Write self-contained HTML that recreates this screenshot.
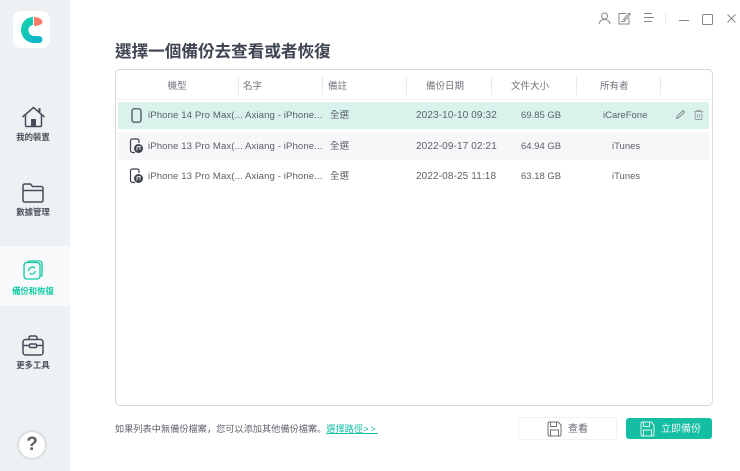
<!DOCTYPE html>
<html><head><meta charset="utf-8">
<style>
html,body{margin:0;padding:0;background:#fff}
#p{position:relative;width:740px;height:471px;overflow:hidden;background:#fff;font-family:"Liberation Sans","Noto Sans CJK TC",sans-serif;color:#555a63}
#p div,#p svg,#p a{position:absolute}
.t{white-space:nowrap;line-height:14px}
.n{font-size:8.4px;font-weight:700;color:#4b505c;width:66px;text-align:center;left:0}
.h{font-size:9.5px;color:#6f737a;top:80px;text-align:center}
.c{font-size:10px;color:#5c6068;letter-spacing:.12px}
.a{font-size:9.6px;letter-spacing:.1px}
.b{font-size:9.500px;letter-spacing:0}
.x{font-size:9.500px;letter-spacing:0}
.s{width:1px;height:18px;top:77px;background:#e6e8ea}
.sc{font-family:"Noto Sans CJK SC",sans-serif}
</style></head><body><div id="p">
<div style="left:0;top:0;width:70px;height:471px;background:#eef1f3"></div>
<div style="left:0;top:246px;width:70px;height:60px;background:#f8fafb"></div>
<div style="left:13px;top:11px;width:37px;height:37px;border-radius:8px;background:#fff"></div>
<svg style="left:13px;top:11px" width="37" height="37" viewBox="0 0 37 37">
<defs><linearGradient id="g" x1="0" y1="0" x2="1" y2="1"><stop offset="0" stop-color="#14d6a6"/><stop offset="1" stop-color="#0fb0cf"/></linearGradient></defs>
<path d="M20 6 C13 6 8 12 8 19 C8 26 14 32 21 32 L26 32 A3.500 3.500 0 0 0 26 25 L21.500 25 C18 25 15.500 22.500 15.500 19 C15.500 16 17.500 14.500 20 14 Z" fill="url(#g)"/>
<path d="M21 6 C26 6 29.500 8.500 29.500 11 C29.500 13 26 15 21 15 Z" fill="#fb7b68"/>
</svg>
<svg style="left:21px;top:106px" width="25" height="22" viewBox="0 0 25 22" fill="none" stroke="#474c5a" stroke-width="1.500">
<path d="M1.500 11 L12.500 1.500 L23.500 11"/><path d="M4.500 9 V19 Q4.500 20.500 6 20.500 H19 Q20.500 20.500 20.500 19 V9"/><path d="M18.500 2 V6" stroke-width="2"/><rect x="10" y="13" width="5" height="7.500" fill="#474c5a" stroke="none"/>
</svg>
<div class="t n" style="top:130px">我的裝置</div>
<svg style="left:22px;top:183px" width="22" height="20" viewBox="0 0 22 20" fill="none" stroke="#474c5a" stroke-width="1.500">
<path d="M1 17 V3 Q1 1 3 1 H8.500 L10.500 3.500 H19 Q21 3.500 21 5.500 V17 Q21 19 19 19 H3 Q1 19 1 17 Z"/><path d="M1 7.500 H21"/>
</svg>
<div class="t n" style="top:205px">數據管理</div>
<svg style="left:23px;top:260px" width="20" height="20" viewBox="0 0 20 20" fill="none" stroke="#10c9a3" stroke-width="1.300">
<rect x="1" y="2.500" width="16" height="16.500" rx="3"/><path d="M4.500 2 Q5 1 6.500 1 H16 Q19 1 19 4 V14.500 Q19 16 18 16.500"/>
<path d="M5.500 11 A4 4 0 0 1 12 8"/><path d="M12.500 11 A4 4 0 0 1 6.500 13.500"/>
</svg>
<div class="t n" style="top:284px;color:#10c9a3">備份和恢復</div>
<svg style="left:22px;top:335px" width="22" height="21" viewBox="0 0 22 21" fill="none" stroke="#474c5a" stroke-width="1.500">
<rect x="1" y="4.500" width="20" height="15.500" rx="2.500"/><path d="M7 4.500 V3 Q7 1 9 1 H13 Q15 1 15 3 V4.500"/><path d="M1 10.500 H7.500 M14.500 10.500 H21"/><rect x="7.500" y="9" width="7" height="3.500" rx="1"/>
</svg>
<div class="t n" style="top:358px">更多工具</div>
<div style="left:19px;top:432px;width:26px;height:26px;border-radius:50%;background:#fff;box-shadow:0 0 3px rgba(0,0,0,.3);text-align:center;font:700 19px/26px 'Liberation Sans',sans-serif;color:#5a5e67">?</div>

<svg style="left:598px;top:12px" width="13" height="13" viewBox="0 0 13 13" fill="none" stroke="#84888e" stroke-width="1"><circle cx="6.500" cy="4" r="3"/><path d="M1 12 Q2 7.500 6.500 7.500 Q11 7.500 12 12"/></svg>
<svg style="left:618px;top:11px" width="13" height="14" viewBox="0 0 13 14" fill="none" stroke="#84888e" stroke-width="1"><path d="M8 2.500 H1 V13 H11 V6.500"/><path d="M5.500 8.500 L11 2 L12.500 3 L7 9.500 Z"/><path d="M3 10.500 H7"/></svg>
<svg style="left:644px;top:12px" width="10" height="10" viewBox="0 0 10 10" stroke="#84888e" stroke-width="1"><path d="M0 1.500 H8 M0 5.500 H10 M0 9.500 H8"/></svg>
<div style="left:665px;top:13px;width:1px;height:10px;background:#e3eef2"></div>
<div style="left:679px;top:20px;width:10px;height:1px;background:#84888e"></div>
<div style="left:702px;top:14px;width:9px;height:9px;border:1px solid #84888e;border-radius:1.500px"></div>
<svg style="left:727px;top:14px" width="9" height="9" viewBox="0 0 9 9" stroke="#84888e" stroke-width="1"><path d="M.500 .500 L8.500 8.500 M8.500 .500 L.500 8.500"/></svg>

<div class="t" style="left:115px;top:41px;font-size:16.600px;line-height:22px;font-weight:700;color:#3f4552">選擇一個備份去查看或者恢復</div>

<div style="left:115px;top:69px;width:596px;height:335px;border:1px solid #d6d8da;border-radius:5px"></div>
<div style="left:116px;top:99px;width:595px;height:1px;background:#f0f1f2"></div>
<div class="t h" style="left:147px;width:60px">機型</div>
<div class="s" style="left:238px"></div>
<div class="t h" style="left:243px">名字</div>
<div class="s" style="left:322px"></div>
<div class="t h" style="left:328px">備註</div>
<div class="s" style="left:406px"></div>
<div class="t h" style="left:426px">備份日期</div>
<div class="s" style="left:491px"></div>
<div class="t h" style="left:511px">文件大小</div>
<div class="s" style="left:576px"></div>
<div class="t h" style="left:600px">所有者</div>
<div class="s" style="left:660px"></div>

<div style="left:118px;top:102px;width:591px;height:27px;background:#d9f2ec"></div>
<div style="left:118px;top:132px;width:591px;height:28px;background:#f7f7f9"></div>

<svg style="left:131px;top:108px" width="11" height="15" viewBox="0 0 11 15" fill="none" stroke="#3e424c" stroke-width="1.200"><rect x="1" y=".800" width="9" height="13.400" rx="2.200"/></svg>
<svg style="left:129px;top:138px" width="15" height="16" viewBox="0 0 15 16"><path d="M6 14.500 H4 Q1.500 14.500 1.500 12 V3 Q1.500 1 4 1 H8 Q10 1 10 3 V5" fill="none" stroke="#3e424c" stroke-width="1.200"/><circle cx="9.500" cy="10.500" r="4.500" fill="#3e424c"/><path d="M8 12.500 V9 L11 8.300 V11.800" fill="none" stroke="#fff" stroke-width=".9"/></svg>
<svg style="left:129px;top:168px" width="15" height="16" viewBox="0 0 15 16"><path d="M6 14.500 H4 Q1.500 14.500 1.500 12 V3 Q1.500 1 4 1 H8 Q10 1 10 3 V5" fill="none" stroke="#3e424c" stroke-width="1.200"/><circle cx="9.500" cy="10.500" r="4.500" fill="#3e424c"/><path d="M8 12.500 V9 L11 8.300 V11.800" fill="none" stroke="#fff" stroke-width=".9"/></svg>

<div class="t c a" style="left:148px;top:109px">iPhone 14 Pro Max(...</div>
<div class="t c a" style="left:245px;top:109px">Axiang - iPhone...</div>
<div class="t c" style="left:330px;top:109px;font-size:9.500px">全選</div>
<div class="t c" style="left:416px;top:109px">2023-10-10 09:32</div>
<div class="t c b" style="left:521px;top:109px">69.85 GB</div>
<div class="t c x" style="left:603px;top:109px">iCareFone</div>

<div class="t c a" style="left:148px;top:140px">iPhone 13 Pro Max(...</div>
<div class="t c a" style="left:245px;top:140px">Axiang - iPhone...</div>
<div class="t c" style="left:330px;top:140px;font-size:9.500px">全選</div>
<div class="t c" style="left:416px;top:140px">2022-09-17 02:21</div>
<div class="t c b" style="left:521px;top:140px">64.94 GB</div>
<div class="t c x" style="left:612px;top:140px">iTunes</div>

<div class="t c a" style="left:148px;top:170px">iPhone 13 Pro Max(...</div>
<div class="t c a" style="left:245px;top:170px">Axiang - iPhone...</div>
<div class="t c" style="left:330px;top:170px;font-size:9.500px">全選</div>
<div class="t c" style="left:416px;top:170px">2022-08-25 11:18</div>
<div class="t c b" style="left:521px;top:170px">63.18 GB</div>
<div class="t c x" style="left:612px;top:170px">iTunes</div>

<svg style="left:675px;top:109px" width="11" height="11" viewBox="0 0 11 11" fill="none" stroke="#7c8285" stroke-width=".9"><path d="M1.500 9.500 L2 7.500 L8 1.500 L9.500 3 L3.500 9 Z"/></svg>
<svg style="left:694px;top:110px" width="9" height="10" viewBox="0 0 9 10" fill="none" stroke="#9aa0a2" stroke-width=".9"><path d="M0 1.500 H9 M3 1.500 V.500 H6 V1.500"/><path d="M1.200 1.500 V9.500 H7.800 V1.500"/><path d="M3.500 4 V7.500 M5.500 4 V7.500"/></svg>

<div class="t" style="left:115px;top:421px;font-size:9.200px;color:#5d6168">如果列表中無備份檔案<span class="sc">，</span>您可以添加其他備份檔案<span class="sc">。</span><span style="color:#10bfa5;text-decoration:underline">選擇路徑<span style="letter-spacing:2px">&gt;&gt;</span></span></div>

<div style="left:518px;top:417px;width:97px;height:21px;border:1px solid #f0f1f2;border-radius:3px;background:#fff"></div>
<svg style="left:547px;top:421px" width="15" height="16" viewBox="0 0 15 16" fill="none" stroke="#6b6f76" stroke-width="1"><path d="M1 2.500 Q1 1 2.500 1 H11 L14 4 V13.500 Q14 15 12.500 15 H2.500 Q1 15 1 13.500 Z"/><path d="M3.500 1 V5.500 H9.500 V1"/><path d="M3.500 15 V9 H11.500 V15"/></svg>
<div class="t" style="left:568px;top:423px;font-size:10px;color:#63676e">查看</div>
<div style="left:626px;top:418px;width:86px;height:21px;background:#13bea3;border-radius:3px"></div>
<svg style="left:640px;top:421px" width="15" height="16" viewBox="0 0 15 16" fill="none" stroke="#dff6f1" stroke-width="1"><path d="M1 2.500 Q1 1 2.500 1 H11 L14 4 V13.500 Q14 15 12.500 15 H2.500 Q1 15 1 13.500 Z"/><path d="M3.500 1 V5.500 H9.500 V1"/><path d="M3.500 15 V9 H11.500 V15"/></svg>
<div class="t" style="left:661px;top:423px;font-size:10px;color:#eafaf6">立即備份</div>
</div></body></html>
